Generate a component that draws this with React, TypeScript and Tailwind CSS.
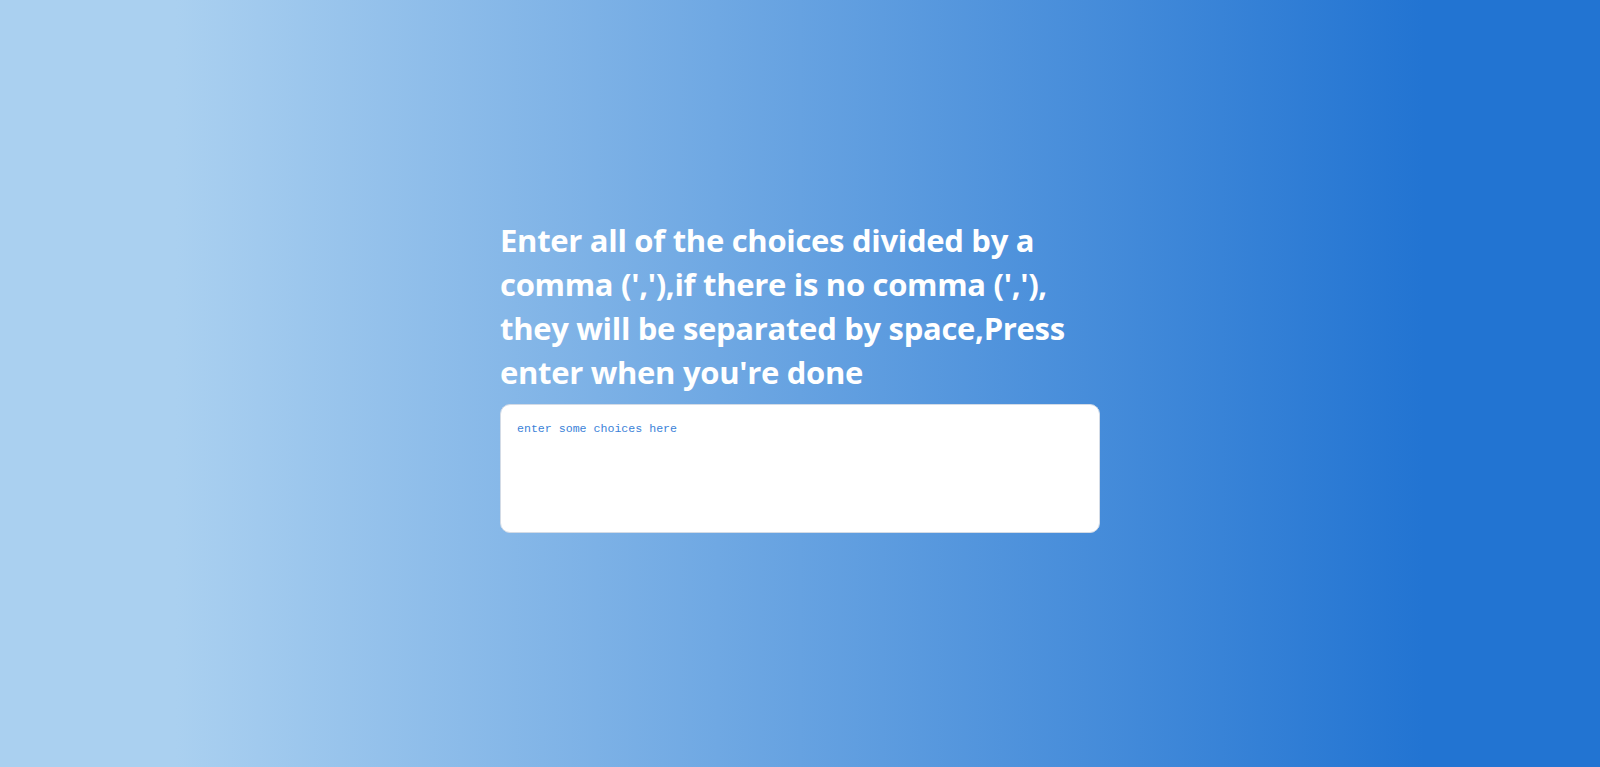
import React from "react";

const App = () => {
  return (
    <main className="min-h-screen w-full flex items-center justify-center bg-[linear-gradient(to_right,#aad0f0_11%,#2274d2_89%)]">
      <div className="w-[600px] pb-[16px]">
        <h1 className="text-white font-bold text-[31px] leading-[44px] font-['Open_Sans',sans-serif] tracking-[-0.3px]">
          Enter all of the choices divided by a comma (','),if there is no
          comma (','), they will be separated by space,Press enter when you're
          done
        </h1>
        <textarea
          placeholder="enter some choices here"
          className="mt-[10px] block w-[600px] h-[129px] resize-none rounded-[10px] border border-[#d3dbe6] bg-white px-4 py-4 text-[11.6px] leading-4 text-[#2f7bd6] placeholder:text-[#3b82d8] font-['Liberation_Mono',monospace] outline-none"
        />
      </div>
    </main>
  );
};

export default App;
